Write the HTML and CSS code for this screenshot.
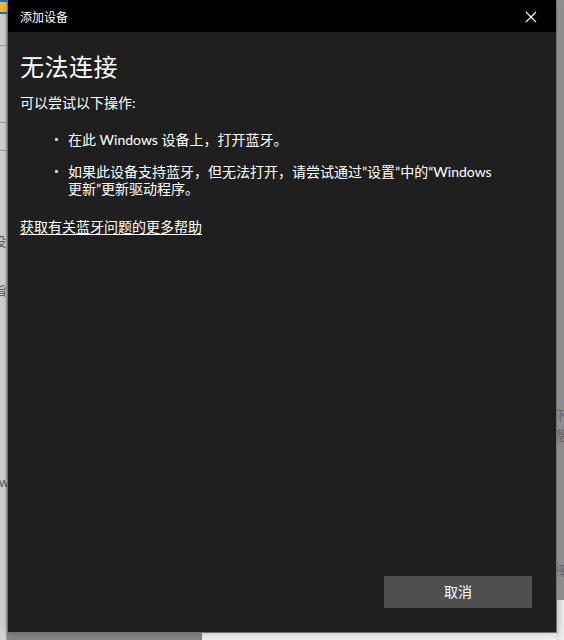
FILE: index.html
```html
<!DOCTYPE html>
<html lang="zh-CN">
<head>
<meta charset="utf-8">
<title>添加设备</title>
<link rel="stylesheet" href="styles.css">
</head>
<body>
<div class="desktop">
  <div class="bgwin">
    <div class="bg-icon"></div>
    <div class="bg-line l1"></div>
    <div class="bg-line l2"></div>
    <div class="bg-line l3"></div>
    <span class="bg-frag f1">设</span>
    <span class="bg-frag f2">指</span>
    <span class="bg-frag f3">ow</span>
    <span class="bg-frag f4">下</span>
    <span class="bg-frag f5">备</span>
    <span class="bg-frag f6">择</span>
    <div class="bg-white"></div>
  </div>

  <div class="dialog">
    <div class="titlebar">
      <span class="title">添加设备</span>
      <svg class="close" width="12" height="12" viewBox="0 0 12 12"><path d="M1 1L11 11M11 1L1 11" stroke="#fff" stroke-width="1.1" fill="none"/></svg>
    </div>
    <div class="content">
      <h1 class="heading">无法连接</h1>
      <p class="lead">可以尝试以下操作:</p>
      <ul class="tips">
        <li>在此 Windows 设备上，打开蓝牙。</li>
        <li>如果此设备支持蓝牙，但无法打开，请尝试通过”设置”中的“Windows 更新”更新驱动程序。</li>
      </ul>
      <a class="help" href="#">获取有关蓝牙问题的更多帮助</a>
    </div>
    <div class="footer">
      <button class="btn">取消</button>
    </div>
  </div>
</div>
</body>
</html>
```

FILE: styles.css
```css
html, body {
  margin: 0;
  padding: 0;
}
body {
  width: 564px;
  height: 640px;
  overflow: hidden;
  background: #d4d4d4;
  font-family: "Lato", "Noto Sans CJK SC", sans-serif;
}
.desktop {
  position: relative;
  width: 564px;
  height: 640px;
}
.bgwin {
  position: absolute;
  inset: 0;
  background: linear-gradient(to right, #d2d2d2 0, #d8d8d8 5px, #c4c4c4 6px, #888 7px);
}
.bg-icon {
  position: absolute;
  left: -6px;
  top: 0;
  width: 11px;
  height: 10px;
  border: 2px solid #1e6fc4;
  border-radius: 3px;
  background: #f0c040;
}
.bg-line {
  position: absolute;
  left: 0;
  width: 7px;
  height: 1px;
  background: #9a9a9a;
}
.bg-line.l1 { top: 45px; }
.bg-line.l2 { top: 122px; }
.bg-line.l3 { top: 150px; }
.bg-frag {
  position: absolute;
  font-family: "Noto Sans CJK SC", sans-serif;
  font-size: 13px;
  color: #555;
  line-height: 16px;
}
.f1 { left: -7px; top: 233px; }
.f2 { left: -7px; top: 282px; }
.f3 { left: -9px; top: 474px; }
.f4 { left: 554px; top: 407px; }
.f5 { left: 554px; top: 427px; }
.f6 { left: 554px; top: 562px; }
.bg-white {
  position: absolute;
  left: 202px;
  top: 600px;
  right: 0;
  bottom: 0;
  background: #f4f4f4;
}
.bgwin::after {
  content: "";
  position: absolute;
  left: 556px;
  top: 0;
  width: 8px;
  height: 640px;
  background: linear-gradient(to right, rgba(200,200,200,0.35), rgba(210,210,210,0.1));
}

.dialog {
  position: absolute;
  left: 7px;
  top: 0;
  width: 550px;
  height: 633px;
  box-sizing: border-box;
  border: 1px solid #727272;
  border-top: none;
  background: #1f1f1f;
  display: flex;
  flex-direction: column;
  color: #fff;
  box-shadow: 0 0 10px rgba(0,0,0,0.25);
  z-index: 2;
}
.titlebar {
  height: 32px;
  background: #000;
  display: flex;
  align-items: center;
  justify-content: space-between;
  padding: 0 19px 0 12px;
  flex-shrink: 0;
}
.title {
  font-size: 12px;
  font-family: "Noto Sans CJK SC", sans-serif;
  color: #fff;
  line-height: 16px;
  margin-top: 1px;
}
.close {
  display: block;
  margin-top: 1px;
}
.content {
  padding: 0 12px;
}
.heading {
  margin: 18px 0 0;
  font-size: 24px;
  line-height: 32px;
  font-weight: 400;
  font-family: "Noto Sans CJK SC", sans-serif;
  letter-spacing: 0.5px;
}
.lead {
  margin: 11px 0 0;
  font-size: 14px;
  line-height: 20px;
}
.tips {
  margin: 18px 0 0;
  padding: 0 0 0 48px;
  list-style: none;
  font-size: 14px;
  line-height: 17px;
}
.tips li {
  position: relative;
  max-width: 432px;
  margin-bottom: 15px;
}
.tips li::before {
  content: "";
  position: absolute;
  left: -13px;
  top: 7px;
  width: 3px;
  height: 3px;
  border-radius: 1px;
  background: #ddd;
}
.help {
  display: inline-block;
  margin-top: 6px;
  font-size: 14px;
  line-height: 18px;
  color: #fff;
  text-decoration: underline;
  text-underline-offset: 2px;
}
.footer {
  margin-top: auto;
  display: flex;
  justify-content: flex-end;
  padding: 0 24px 24px;
}
.btn {
  width: 148px;
  height: 32px;
  border: none;
  background: #4f4f4f;
  color: #fff;
  font-family: "Noto Sans CJK SC", sans-serif;
  font-size: 14px;
  padding: 0 0 3px;
}
```
